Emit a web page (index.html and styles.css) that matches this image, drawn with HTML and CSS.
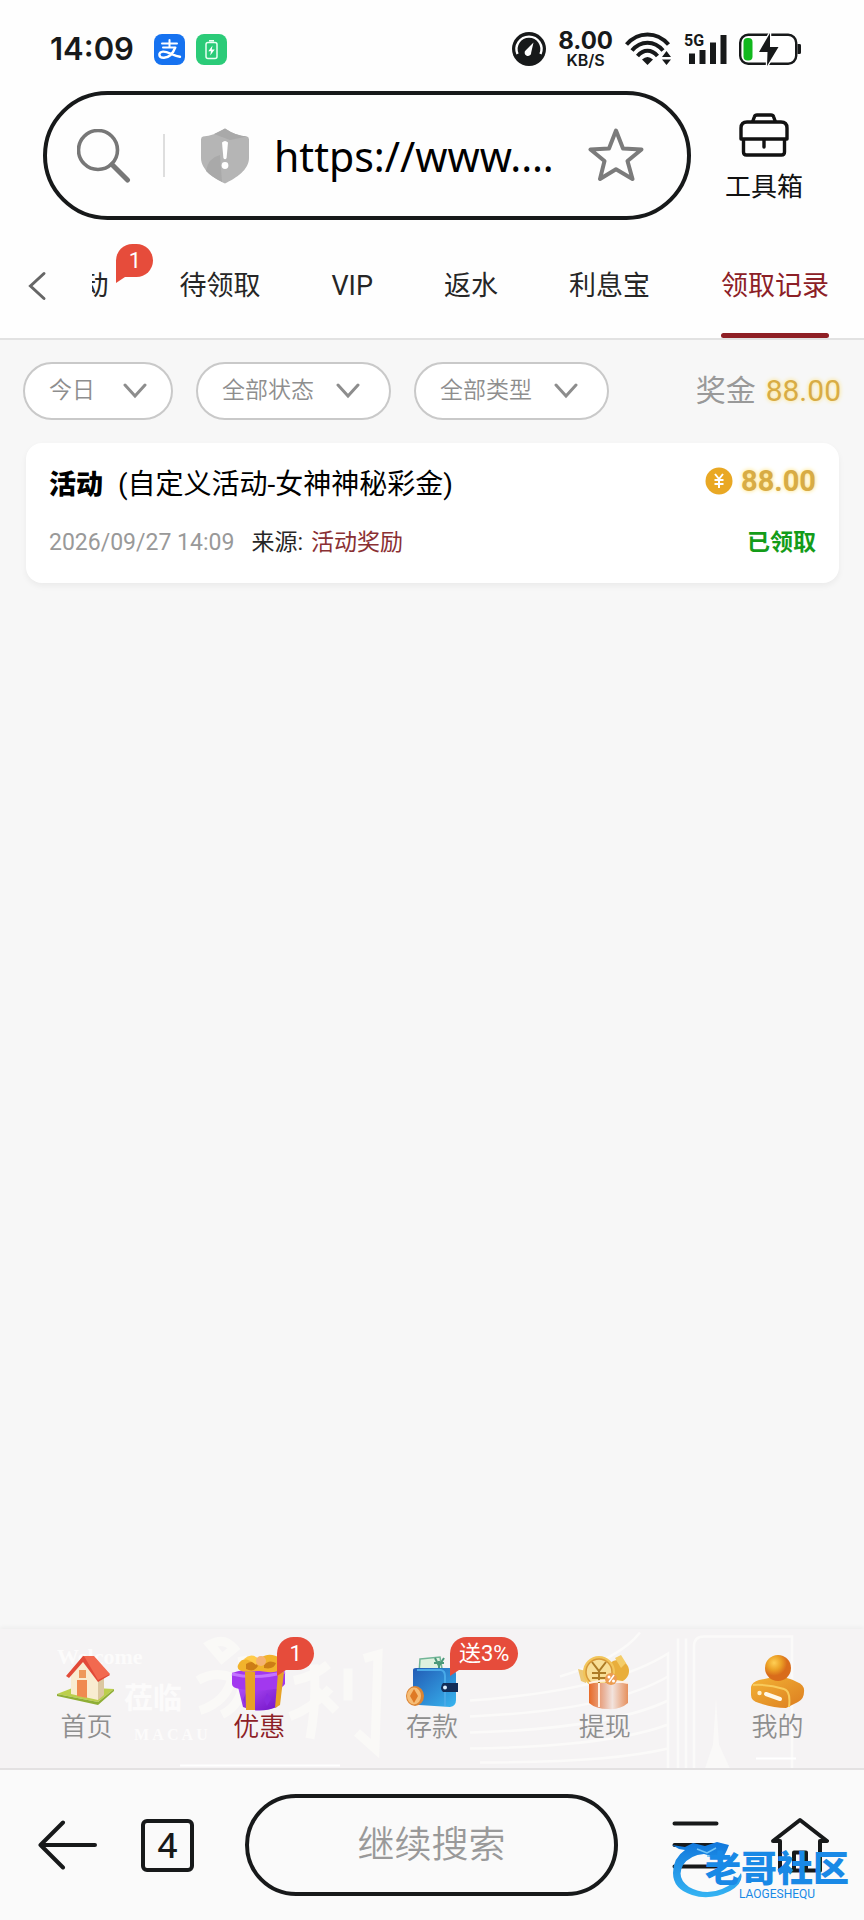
FILE: index.html
```
<!DOCTYPE html>
<html lang="zh-CN">
<head>
<meta charset="utf-8">
<meta name="viewport" content="width=device-width, initial-scale=1">
<title>领取记录</title>
<link rel="stylesheet" href="styles.css">
</head>
<body>
<div class="status">
  <div class="status-group">
    <time class="clock">14:09</time>
    <svg class="app-icon" viewBox="0 0 31 31" role="img" aria-label="支付宝"><rect width="31" height="31" rx="8" fill="#1672f0"/><g fill="none" stroke="#fff" stroke-width="2" stroke-linecap="round"><path d="M8 9.500h15M15.500 6v7M9 13.500h12.500"/><path d="M21 14c-1.500 4-5 9.500-11 9.800-6 .2-6-6-1-6.200 5-.3 10 4.200 17 5.200" stroke-width="2.400"/></g></svg>
    <svg class="app-icon" viewBox="0 0 31 31" role="img" aria-label="充电"><rect width="31" height="31" rx="8" fill="#2bcb78"/><rect x="10" y="8.500" width="11" height="16" rx="2" fill="none" stroke="#e9fff3" stroke-width="1.500"/><path d="M13 6.800h5" stroke="#e9fff3" stroke-width="1.600"/><path d="M16.500 11.500l-4.200 5.800h2.700l-.8 4.200 4.500-6h-2.900z" fill="#fff"/></svg>
  </div>
  <div class="status-group status-right">
    <svg width="34" height="34" viewBox="0 0 34 34" aria-hidden="true"><circle cx="17" cy="17" r="17" fill="#17191a"/><path d="M5.500 22A12.500 12.500 0 1 1 28.500 22" fill="none" stroke="#fff" stroke-width="2.400"/><path d="M21.500 10.500L13.800 18.200a3.300 3.300 0 1 0 5.400 2.200z" fill="#fff"/></svg>
    <div class="speed"><strong>8.00</strong><span>KB/S</span></div>
    <svg width="47" height="34" viewBox="0 0 47 34" aria-hidden="true"><g fill="none" stroke="#17191a" stroke-width="4"><path d="M1.500 12.500C13 -1 32 -1 43.500 12.500"/><path d="M7 18.500C15.500 8 29.500 8 38 18.500"/><path d="M12.500 24C18.500 17 26.500 17 32.500 24"/></g><path d="M17 27.500q5.500-5 11 0L22.500 33z" fill="#17191a"/><path d="M37 25l4.500-6 4.500 6zM37 27.500l4.500 5.500 4.500-5.500z" fill="#17191a"/></svg>
    <svg width="43" height="32" viewBox="0 0 43 32" aria-hidden="true"><text x="0" y="13" class="net-label">5G</text><path d="M5 20.500h6V31H5zM15.500 17h6v14h-6zM26 9.500h6V31h-6zM36.500 2h6v29h-6z" fill="#17191a"/></svg>
    <svg width="62" height="34" viewBox="0 0 62 34" aria-hidden="true"><rect x="1.200" y="2.700" width="56" height="29" rx="8" fill="#fff" stroke="#17191a" stroke-width="2.400"/><rect x="4.500" y="6" width="9" height="22.500" rx="4" fill="#11b81d"/><path d="M58.500 12h2a1.500 1.500 0 0 1 1.500 1.500v7a1.500 1.500 0 0 1-1.500 1.500h-2z" fill="#17191a"/><path d="M31 1L20 20h8.500L28 34 39.500 15H31z" fill="#17191a" stroke="#fff" stroke-width="2.500" paint-order="stroke"/></svg>
  </div>
</div>

<header class="address-row">
  <form class="address">
    <button type="button" class="plain" aria-label="搜索"><svg width="54" height="54" viewBox="0 0 54 54"><circle cx="21" cy="21" r="19.500" fill="none" stroke="#777" stroke-width="3.600"/><path d="M35 35.500L50.500 51" stroke="#777" stroke-width="5" stroke-linecap="round"/></svg></button>
    <span class="divider"></span>
    <svg class="shield" width="50" height="56" viewBox="0 0 50 56" aria-hidden="true"><path d="M25 0.500Q36 8 47 8.500q2 .5 2 3V30c0 12-13 20-24 25.500C14 50 1 42 1 30V11.500q0-2.500 2-3Q14 8 25 .5z" fill="#b5b5b5"/><path d="M25 .5Q36 8 47 8.500L30 12 14 6zM6 43q2-13 14-16l2 27Q11 48.500 6 43z" fill="#a9a9a9"/><path d="M22 14.500q3-3 6 0L26.600 30q-1.600 2.500-3.200 0z" fill="#fff"/><circle cx="25" cy="37.500" r="3.400" fill="#fff"/></svg>
    <input class="url" type="text" aria-label="网址" value="https://www.…">
    <button type="button" class="plain" aria-label="收藏"><svg width="56" height="56" viewBox="0 0 56 56"><path d="M28 2.500L35 20.500 53.500 21.500 39.500 33 44.500 51 28 41.300 12 51 16.500 33 2.500 21.500 21 20.500z" fill="none" stroke="#7b7b7b" stroke-width="4" stroke-linejoin="round"/></svg></button>
  </form>
  <button type="button" class="plain toolbox"><svg width="50" height="44" viewBox="0 0 50 44" aria-hidden="true"><g fill="none" stroke="#111" stroke-width="3.400" stroke-linejoin="round"><path d="M13.500 9l2-5.500Q16 2 18 2h14q2 0 2.500 1.500l2 5.500"/><path d="M2 26V15q0-6 6-6h34q6 0 6 6v11z"/><path d="M4.500 26v13q0 3 3 3h35q3 0 3-3V26"/><path d="M25 27v7" stroke-linecap="round"/></g></svg><span>工具箱</span></button>
</header>

<nav class="tabs" aria-label="优惠分类">
  <button type="button" class="plain" aria-label="返回"><svg width="19" height="30" viewBox="0 0 19 30"><path d="M16 2.500L2.500 15 16 27.500" fill="none" stroke="#666" stroke-width="3" stroke-linecap="round"/></svg></button>
  <div class="tab-strip">
    <a href="#activity">活动<span class="badge">1</span></a>
    <a href="#pending">待领取</a>
    <a href="#vip">VIP</a>
    <a href="#rebate">返水</a>
    <a href="#interest">利息宝</a>
    <a href="#records" class="active" aria-current="page">领取记录</a>
  </div>
</nav>

<main class="content">
  <div class="filters">
    <label class="filter short"><select aria-label="日期"><option>今日</option></select><svg viewBox="0 0 24 16" aria-hidden="true"><path d="M2 2l10 11L22 2"/></svg></label>
    <label class="filter"><select aria-label="状态"><option>全部状态</option></select><svg viewBox="0 0 24 16" aria-hidden="true"><path d="M2 2l10 11L22 2"/></svg></label>
    <label class="filter"><select aria-label="类型"><option>全部类型</option></select><svg viewBox="0 0 24 16" aria-hidden="true"><path d="M2 2l10 11L22 2"/></svg></label>
    <p class="bonus"><span>奖金</span><span class="gold">88.00</span></p>
  </div>
  <article class="card">
    <div class="card-row title-row">
      <h2><b>活动</b><span>(自定义活动-女神神秘彩金)</span></h2>
      <div class="amount"><svg width="28" height="28" viewBox="0 0 28 28" aria-hidden="true"><circle cx="14" cy="14" r="13.500" fill="#e9a824"/><path d="M10 7l4 5 4-5M14 12v9M9.500 13h9M9.500 17h9" fill="none" stroke="#fff" stroke-width="2"/></svg><span class="gold">88.00</span></div>
    </div>
    <div class="card-row">
      <p class="meta"><time>2026/09/27 14:09</time><span>来源:</span><em>活动奖励</em></p>
      <strong class="state">已领取</strong>
    </div>
  </article>
</main>

<nav class="dock" aria-label="主导航">
  <svg class="dock-art" viewBox="0 0 864 140" preserveAspectRatio="xMidYMid slice" aria-hidden="true">
    <g class="dock-words">
      <text x="57" y="35" font-size="22">Welcome</text>
      <text x="124" y="80" font-size="29">莅临</text>
      <text x="134" y="111" font-size="16">M A C A U</text>
    </g>
    <g fill="none" stroke="#fbfaf9" stroke-width="2.500">
      <path d="M470 72Q610 62 668 25V140M470 88Q610 82 668 48M470 104Q610 100 668 72M470 120Q610 118 668 96M480 134Q610 134 668 120"/>
      <path d="M560 48Q620 30 640 4M678 10v130M686 10v130M694 140V18q0-10 10-10h88v132"/>
    </g>
    <path d="M210 16q14-8 24 4l-12 10zM198 52q16-10 34-3-5 24-32 33M242 28q8 44-20 58M328 36q-14 12-34 16M314 36q3 36-4 74M330 60q-18 20-40 28M316 62l20 20M348 40v32M364 30l14-4-3 94-18-16" fill="none" stroke="#faf9f7" stroke-width="9"/>
    <path d="M705 140l8-24 3-46 3 46 11 24z" fill="#faf9f8"/>
    <path d="M180 137h160M756 130h40" stroke="#fff" stroke-width="2"/>
  </svg>
  <a href="#home"><svg viewBox="0 0 58 58" aria-hidden="true"><path d="M0 41L18 34 57 36 41 49z" fill="#bccf4c"/><path d="M0 41l41 8 16-13v2L41 52 0 43z" fill="#8fae35"/><path d="M14 22L26 7 41 28V47L14 41z" fill="#f9ecd0"/><path d="M41 28l6-4v18l-6 5z" fill="#dcc7a0"/><path d="M20 27h10v18l-10-2z" fill="#f08a50"/><path d="M22 17h7v8h-7z" fill="#ee995b"/><path d="M26 3L9 23 12 25 26 9 41 29 53 22 37 4z" fill="#e24a38"/><path d="M27 3h10l16 18-12 6z" fill="#f2694f"/></svg><span>首页</span></a>
  <a href="#promo" class="active"><svg viewBox="0 0 58 58" aria-hidden="true"><defs><linearGradient id="purple" x2="1" y2="1"><stop stop-color="#b655ff"/><stop offset="1" stop-color="#7011c4"/></linearGradient></defs><path d="M7 30h45l-5 24q-18 7-34 0z" fill="url(#purple)"/><path d="M2 20q24-8 53 0v11q-3 5-11 5-18 3-34 0-8-1-8-5z" fill="#a238ef"/><path d="M2 21q24 6 53-2" fill="none" stroke="#c474ff" stroke-width="3"/><path d="M16 40l4 6-4 7-3-6zM37 40l4 6-4 7-3-6z" fill="#8a2ce0"/><path d="M14 19h10v38H15z" transform="translate(1)" fill="#e7a226"/><path d="M48 20l6-1-4 33-5 3z" fill="#e7a226"/><path d="M27 18Q5 21 8 12 12 2 29 8q5-9 17-5 9 3 7 13-8 5-23 2z" fill="#f2b32c"/><path d="M16 11q7-5 12 2-4 7-12 3zM34 12q5-6 12-2-2 7-12 5z" fill="#cd7d16"/><path d="M14 6q7-7 15 0l-3 6q-5-5-12-6z" fill="#ffcb4a"/><circle cx="31" cy="8" r="5" fill="#f6b273"/></svg><span>优惠</span><b class="badge">1</b></a>
  <a href="#deposit"><svg viewBox="0 0 58 58" aria-hidden="true"><defs><linearGradient id="blue" x2="1" y2="1"><stop stop-color="#225bb5"/><stop offset="1" stop-color="#38b5ef"/></linearGradient></defs><path d="M17 6l20-2 3 17H16z" fill="#dff1df" stroke="#72b597" stroke-width="1.500"/><path d="M32 5l4 8 5-8M31 10h10M36 8v10" stroke="#4b997a" stroke-width="2" fill="none"/><path d="M10 17q0-2 3-2h34q6 0 6 6v26q0 6-6 7L16 52q-6 0-6-6z" fill="url(#blue)"/><path d="M14 17h24q4 1 4 6v30" fill="none" stroke="#48a9e8" stroke-width="2"/><path d="M40 30h15v9H40q-4-4 0-9z" fill="#122c58"/><circle cx="42" cy="34.500" r="2" fill="#dceeff"/><ellipse cx="12" cy="43" rx="9" ry="10" fill="#dc8433"/><ellipse cx="11" cy="43" rx="7" ry="8.500" fill="#f6bd76"/><path d="M11 36l4 7-4 7-4-7z" fill="#df7925"/></svg><span>存款</span><b class="badge">送3%</b></a>
  <a href="#withdraw"><svg viewBox="0 0 58 58" aria-hidden="true"><defs><linearGradient id="cup"><stop stop-color="#e86a27"/><stop offset=".4" stop-color="#e9b6a0"/><stop offset=".6" stop-color="#f2e3dd"/><stop offset="1" stop-color="#e6905d"/></linearGradient></defs><path d="M2 16l8 2v12l-5-2z" fill="#ecc874"/><circle cx="42" cy="18" r="11" fill="#e9ae3b"/><path d="M39 5l6-3 5 8-5 5z" fill="#f4cc68"/><circle cx="23" cy="19" r="16" fill="#f2c55b"/><circle cx="23" cy="19" r="13" fill="#f8de96" stroke="#d89938" stroke-width="1.500"/><path d="M16 9l7 9 7-9M23 18v12M16 20h14M16 25h14" fill="none" stroke="#ad7b26" stroke-width="2"/><path d="M13 30h39v20q-8 7-20 6-12 0-19-6z" fill="url(#cup)"/><path d="M13 30q18-5 39 0M23 30v24" fill="none" stroke="#fff0e3" stroke-width="2"/><circle cx="35" cy="26" r="6" fill="#ed9c51"/><path d="M33 29l5-7" stroke="#fff" stroke-width="1.500"/><circle cx="33" cy="24" r="1.500" fill="#fff"/><circle cx="37.500" cy="28" r="1.500" fill="#fff"/></svg><span>提现</span></a>
  <a href="#mine"><svg viewBox="0 0 58 58" aria-hidden="true"><defs><linearGradient id="base" y2="1"><stop stop-color="#f3b335"/><stop offset="1" stop-color="#dc7d20"/></linearGradient><radialGradient id="gold" cx=".35" cy=".3"><stop stop-color="#ffcf55"/><stop offset=".55" stop-color="#eca126"/><stop offset="1" stop-color="#d96c1b"/></radialGradient></defs><path d="M2 34q1-5 8-7l10-2q15-3 28 4 8 3 7 10 0 7-6 10l-12 6q-13 0-27-5-8-2-8-8z" fill="url(#base)"/><path d="M4 32q15-1 31 4 7 2 5 18" fill="none" stroke="#f8cb5c" stroke-width="2"/><circle cx="29" cy="15" r="13" fill="url(#gold)"/><circle cx="10.500" cy="40" r="2.200" fill="#fff1c9"/><path d="M17 41l14 5" stroke="#fff9e8" stroke-width="4" stroke-linecap="round"/></svg><span>我的</span></a>
</nav>

<footer class="browser-bar">
  <button type="button" class="plain" aria-label="后退"><svg width="60" height="50" viewBox="0 0 60 50"><path d="M26 2.500L3.500 25 26 47.500M3.500 25H58" fill="none" stroke="#17191a" stroke-width="4" stroke-linecap="round" stroke-linejoin="round"/></svg></button>
  <button type="button" class="pages" aria-label="4 个窗口">4</button>
  <input class="search" type="text" aria-label="继续搜索" placeholder="继续搜索">
  <button type="button" class="plain" aria-label="菜单"><svg width="48" height="50" viewBox="0 0 48 50"><path d="M2.500 3.500h42M2.500 25h42M2.500 46.500h42" stroke="#17191a" stroke-width="4" stroke-linecap="round"/></svg></button>
  <button type="button" class="plain home" aria-label="主页"><svg width="58" height="56" viewBox="0 0 58 56"><path d="M9 24H2L29 3 56 24H49V53.500H9zM23 53V35.500H35V53" fill="none" stroke="#17191a" stroke-width="4" stroke-linejoin="round"/></svg></button>
  <div class="watermark">
    <svg width="72" height="56" viewBox="0 0 72 56" aria-hidden="true"><defs><linearGradient id="wave" x2="0" y2="1"><stop stop-color="#1177dc"/><stop offset="1" stop-color="#35b4f3"/></linearGradient></defs><path d="M0 3L13 5 21 1 33 4 45 0 57 3 55 8 52 14 42 15 32 12Q18 13 11 23 4 36 17 45 33 54 50 47 64 41 69 31 72 41 58 49 38 59 20 53 1 47 1 31 1 16 13 8L7 7z" fill="url(#wave)"/><path d="M25 7l10 4 9-5M35 14l10 1" stroke="#74c6f8" stroke-width="1.500" fill="none"/></svg>
    <p><strong>老哥社区</strong><span>LAOGESHEQU</span></p>
  </div>
</footer>
</body>
</html>
```
FILE: styles.css
```
* {
  box-sizing: border-box;
}

body {
  margin: 0;
  min-height: 100vh;
  display: flex;
  flex-direction: column;
  background: #fefefe;
  color: #262626;
  font-family: Roboto, "Noto Sans CJK SC", sans-serif;
}

svg {
  display: block;
  flex: none;
}

a {
  color: inherit;
  text-decoration: none;
}

p,
h2 {
  margin: 0;
}

.plain {
  display: block;
  flex: none;
  padding: 0;
  border: 0;
  background: none;
  color: inherit;
  font: inherit;
}

/* Phone status */
.status {
  display: flex;
  align-items: center;
  justify-content: space-between;
  padding: 29px 63px 22px 50px;
  color: #17191a;
  font-family: Inter, sans-serif;
}

.status-group {
  display: flex;
  align-items: center;
  gap: 11px;
}

.status-right {
  gap: 12px;
}

.clock {
  margin-right: 9px;
  font-size: 31px;
  font-weight: 600;
  line-height: 40px;
}

.app-icon {
  width: 31px;
  height: 31px;
}

.speed {
  display: grid;
  justify-items: center;
  font-weight: 600;
}

.speed strong {
  font-size: 24px;
  font-weight: 700;
  line-height: 22px;
}

.speed span {
  font-size: 16px;
  line-height: 16px;
}

.net-label {
  fill: #17191a;
  font: 700 16px Roboto, sans-serif;
}

/* Address bar */
.address-row {
  display: flex;
  align-items: center;
  gap: 34px;
  padding: 0 61px 0 43px;
}

.address {
  display: flex;
  align-items: center;
  flex: 1;
  min-width: 0;
  height: 129px;
  padding: 0 43px 0 30px;
  border: 4px solid #17191a;
  border-radius: 65px;
}

.divider {
  flex: none;
  width: 2px;
  height: 43px;
  margin: 0 35px 0 32px;
  background: #dedede;
}

.url {
  flex: 1;
  min-width: 0;
  margin: 0 24px;
  padding: 0;
  border: 0;
  background: none;
  color: #000;
  font: 41px "Noto Sans", sans-serif;
}

.toolbox {
  display: grid;
  justify-items: center;
  gap: 12px;
  padding-top: 6px;
  color: #111;
  font-size: 26px;
  line-height: 36px;
}

/* Category tabs */
.tabs {
  display: flex;
  align-items: center;
  height: 120px;
  padding: 0 35px 0 28px;
  border-bottom: 2px solid #e2e2e2;
}

.tabs .plain {
  padding-top: 13px;
}

.tab-strip {
  display: flex;
  justify-content: flex-end;
  flex: 1;
  min-width: 0;
  height: 100%;
  margin-left: 45px;
  gap: 71px;
  overflow: hidden;
  font-size: 27px;
  line-height: 40px;
  white-space: nowrap;
}

.tab-strip a {
  position: relative;
  flex: none;
  padding-top: 46px;
}

.tab-strip .active {
  color: #8c2026;
}

.tab-strip .active::after {
  content: "";
  position: absolute;
  inset: auto 0 0;
  height: 5px;
  border-radius: 3px;
  background: #8f1f25;
}

.badge {
  position: absolute;
  top: 24px;
  left: calc(100% + 8px);
  min-width: 37px;
  padding: 0 9px;
  border-radius: 17px 17px 17px 0;
  background: #e64c3b;
  color: #fff;
  font-size: 22px;
  font-weight: 400;
  line-height: 33px;
  text-align: center;
  white-space: nowrap;
}

.badge::after {
  content: "";
  position: absolute;
  top: 100%;
  left: 0;
  border-top: 6px solid #e64c3b;
  border-right: 9px solid transparent;
}

/* Records */
.content {
  flex: 1;
  padding: 22px 23px;
  background: #f7f7f7;
}

.filters {
  display: flex;
  align-items: center;
  gap: 23px;
}

.filter {
  display: flex;
  align-items: center;
  justify-content: space-between;
  width: 195px;
  height: 58px;
  padding: 0 29px 0 24px;
  border: 2px solid #c9c9c9;
  border-radius: 29px;
  background: #fff;
}

.filter.short {
  width: 150px;
  padding-right: 24px;
}

.filter select {
  appearance: none;
  padding: 0;
  border: 0;
  background: none;
  color: #8e8e8e;
  font: 350 23px/32px Roboto, "Noto Sans CJK SC", sans-serif;
}

.filter svg {
  width: 24px;
  height: 16px;
  fill: none;
  stroke: #8d8d8d;
  stroke-width: 3;
  stroke-linecap: round;
}

.bonus {
  display: flex;
  gap: 10px;
  margin-left: auto;
  color: #999;
  font-size: 30px;
  line-height: 40px;
  white-space: nowrap;
}

.gold {
  color: #d8ac45;
  text-shadow: 0 0 4px #ffdf70;
}

.card {
  display: grid;
  gap: 20px;
  margin: 23px 2px 0 3px;
  padding: 20px 23px 24px;
  border-radius: 16px;
  background: #fff;
  box-shadow: 0 3px 6px rgba(0, 0, 0, 0.05);
}

.card-row {
  display: flex;
  align-items: center;
  justify-content: space-between;
  font-size: 23px;
  line-height: 32px;
}

.title-row {
  align-items: flex-start;
  line-height: 44px;
}

.card h2 {
  display: flex;
  gap: 15px;
  color: #000;
  font-size: 28px;
  font-weight: 400;
}

.card h2 b {
  font-size: 27px;
  font-weight: 900;
}

.amount {
  display: flex;
  align-items: center;
  gap: 8px;
  font-size: 29px;
  font-weight: 700;
  line-height: 36px;
}

.meta {
  display: flex;
  gap: 17px;
}

.meta time {
  color: #999;
}

.meta em {
  margin-left: -9px;
  color: #8a3033;
  font-style: normal;
}

.state {
  color: #149c19;
}

/* Site navigation */
.dock {
  position: relative;
  display: grid;
  grid-template-columns: repeat(5, 1fr);
  padding: 24px 0 25px;
  border-bottom: 2px solid #e3e1e2;
  background: #f5f3f4;
  box-shadow: 0 -2px 4px rgba(0, 0, 0, 0.04);
  color: #8e8e8e;
  font-size: 26px;
  font-weight: 350;
  line-height: 32px;
}

.dock-art {
  position: absolute;
  inset: 0;
  width: 100%;
  height: 100%;
}

.dock-words {
  fill: #fcfbfb;
  font-family: "Liberation Serif", "Noto Sans CJK SC", serif;
  font-weight: 700;
}

.dock a {
  position: relative;
  display: grid;
  justify-items: center;
}

.dock a svg {
  width: 58px;
  height: 58px;
}

.dock .active {
  color: #8c2026;
}

.dock .badge {
  top: -16px;
  left: calc(50% + 18px);
}

/* Browser controls */
.browser-bar {
  position: relative;
  display: flex;
  align-items: center;
  justify-content: space-between;
  height: 150px;
  padding: 0 35px 0 37px;
  background: #fafafa;
}

.pages {
  width: 53px;
  height: 53px;
  margin-left: 44px;
  padding: 0;
  border: 4px solid #17191a;
  border-radius: 6px;
  background: none;
  color: #17191a;
  font: 500 35px/44px "Noto Sans", sans-serif;
}

.search {
  flex: 1;
  min-width: 0;
  height: 102px;
  margin: 0 54px 0 51px;
  padding: 0 20px;
  border: 4px solid #17191a;
  border-radius: 51px;
  background: none;
  font: 350 37px Roboto, "Noto Sans CJK SC", sans-serif;
  text-align: center;
}

.search::placeholder {
  color: #999;
}

.home {
  margin-left: 51px;
}

.watermark {
  position: absolute;
  right: 15px;
  bottom: 22px;
  pointer-events: none;
  color: #1989e6;
}

.watermark p {
  position: absolute;
  right: 0;
  bottom: -2px;
  display: grid;
  justify-items: center;
}

.watermark strong {
  font-size: 36px;
  font-weight: 900;
  line-height: 36px;
  white-space: nowrap;
}

.watermark span {
  font-size: 12px;
  line-height: 12px;
}

.watermark svg {
  margin-right: 105px;
}
```
